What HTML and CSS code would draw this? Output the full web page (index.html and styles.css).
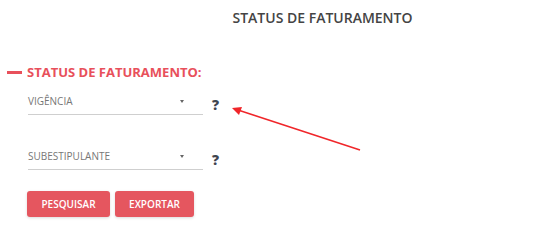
FILE: index.html
```html
<!DOCTYPE html>
<html lang="en">
<head>
    <meta charset="UTF-8">
    <meta name="viewport" content="width=device-width, initial-scale=1.0">
    <title>Status de Faturamento</title>
    <link rel="stylesheet" href="styles.css">
</head>
<body>
    <h1 class="page-title">STATUS DE FATURAMENTO</h1>

    <div class="section">
        <h2 class="section-title"><span class="dash"></span>STATUS DE FATURAMENTO:</h2>

        <div class="field-row">
            <div class="select">
                <span>VIGÊNCIA</span>
                <span class="caret"></span>
            </div>
            <span class="help">?</span>
        </div>

        <div class="field-row second">
            <div class="select">
                <span>SUBESTIPULANTE</span>
                <span class="caret"></span>
            </div>
            <span class="help">?</span>
        </div>

        <div class="actions">
            <button class="btn btn-search">PESQUISAR</button>
            <button class="btn btn-export">EXPORTAR</button>
        </div>
    </div>

    <!-- annotation arrow pointing at the help icon -->
    <svg class="arrow" width="533" height="242" viewBox="0 0 533 242">
        <line x1="360" y1="150" x2="238" y2="110" stroke="#f0262a" stroke-width="1.6" />
        <polygon points="232,108 242,107 239,115" fill="#f0262a" />
    </svg>
</body>
</html>
```

FILE: styles.css
```css
body {
    margin: 0;
    padding: 9px 0 0 0;
    font-family: "Open Sans", Lato, sans-serif;
    background-color: #fff;
    position: relative;
    height: 242px;
    box-sizing: border-box;
}
.page-title {
    margin: 0;
    padding-left: 112px;
    text-align: center;
    font-size: 14px;
    line-height: 18px;
    font-weight: 600;
    color: #444;
}
.section {
    margin-top: 37px;
}
.section-title {
    display: flex;
    align-items: center;
    margin: 0 0 14px 7px;
    font-size: 13px;
    line-height: 16px;
    font-weight: 700;
    color: #e8505b;
}
.dash {
    display: inline-block;
    width: 15px;
    height: 3px;
    background-color: #e8505b;
    margin-right: 5px;
}
.field-row {
    display: flex;
    align-items: flex-end;
    margin-left: 28px;
}
.field-row.second {
    margin-top: 34px;
}
.select {
    display: flex;
    justify-content: space-between;
    align-items: center;
    width: 175px;
    padding-bottom: 6px;
    border-bottom: 1px solid #cfcfcf;
    font-size: 10px;
    line-height: 14px;
    color: #777;
}
.caret {
    width: 0;
    height: 0;
    margin-right: 19px;
    border-left: 2.5px solid transparent;
    border-right: 2.5px solid transparent;
    border-top: 3px solid #666;
}
.help {
    margin-left: 9px;
    margin-bottom: 2px;
    font-size: 14px;
    line-height: 16px;
    font-weight: 800;
    color: #3f4550;
}
.actions {
    display: flex;
    gap: 5px;
    margin: 21px 0 0 27px;
}
.btn {
    height: 26px;
    padding: 0;
    border: none;
    border-radius: 3px;
    background-color: #e5565f;
    color: #fff;
    font-family: "Open Sans", Lato, sans-serif;
    font-size: 10px;
    font-weight: 600;
    box-shadow: 0 1px 3px rgba(0,0,0,0.15);
    cursor: pointer;
}
.btn-search {
    width: 83px;
}
.btn-export {
    width: 79px;
}
.arrow {
    position: absolute;
    left: 0;
    top: 0;
    pointer-events: none;
}
```
